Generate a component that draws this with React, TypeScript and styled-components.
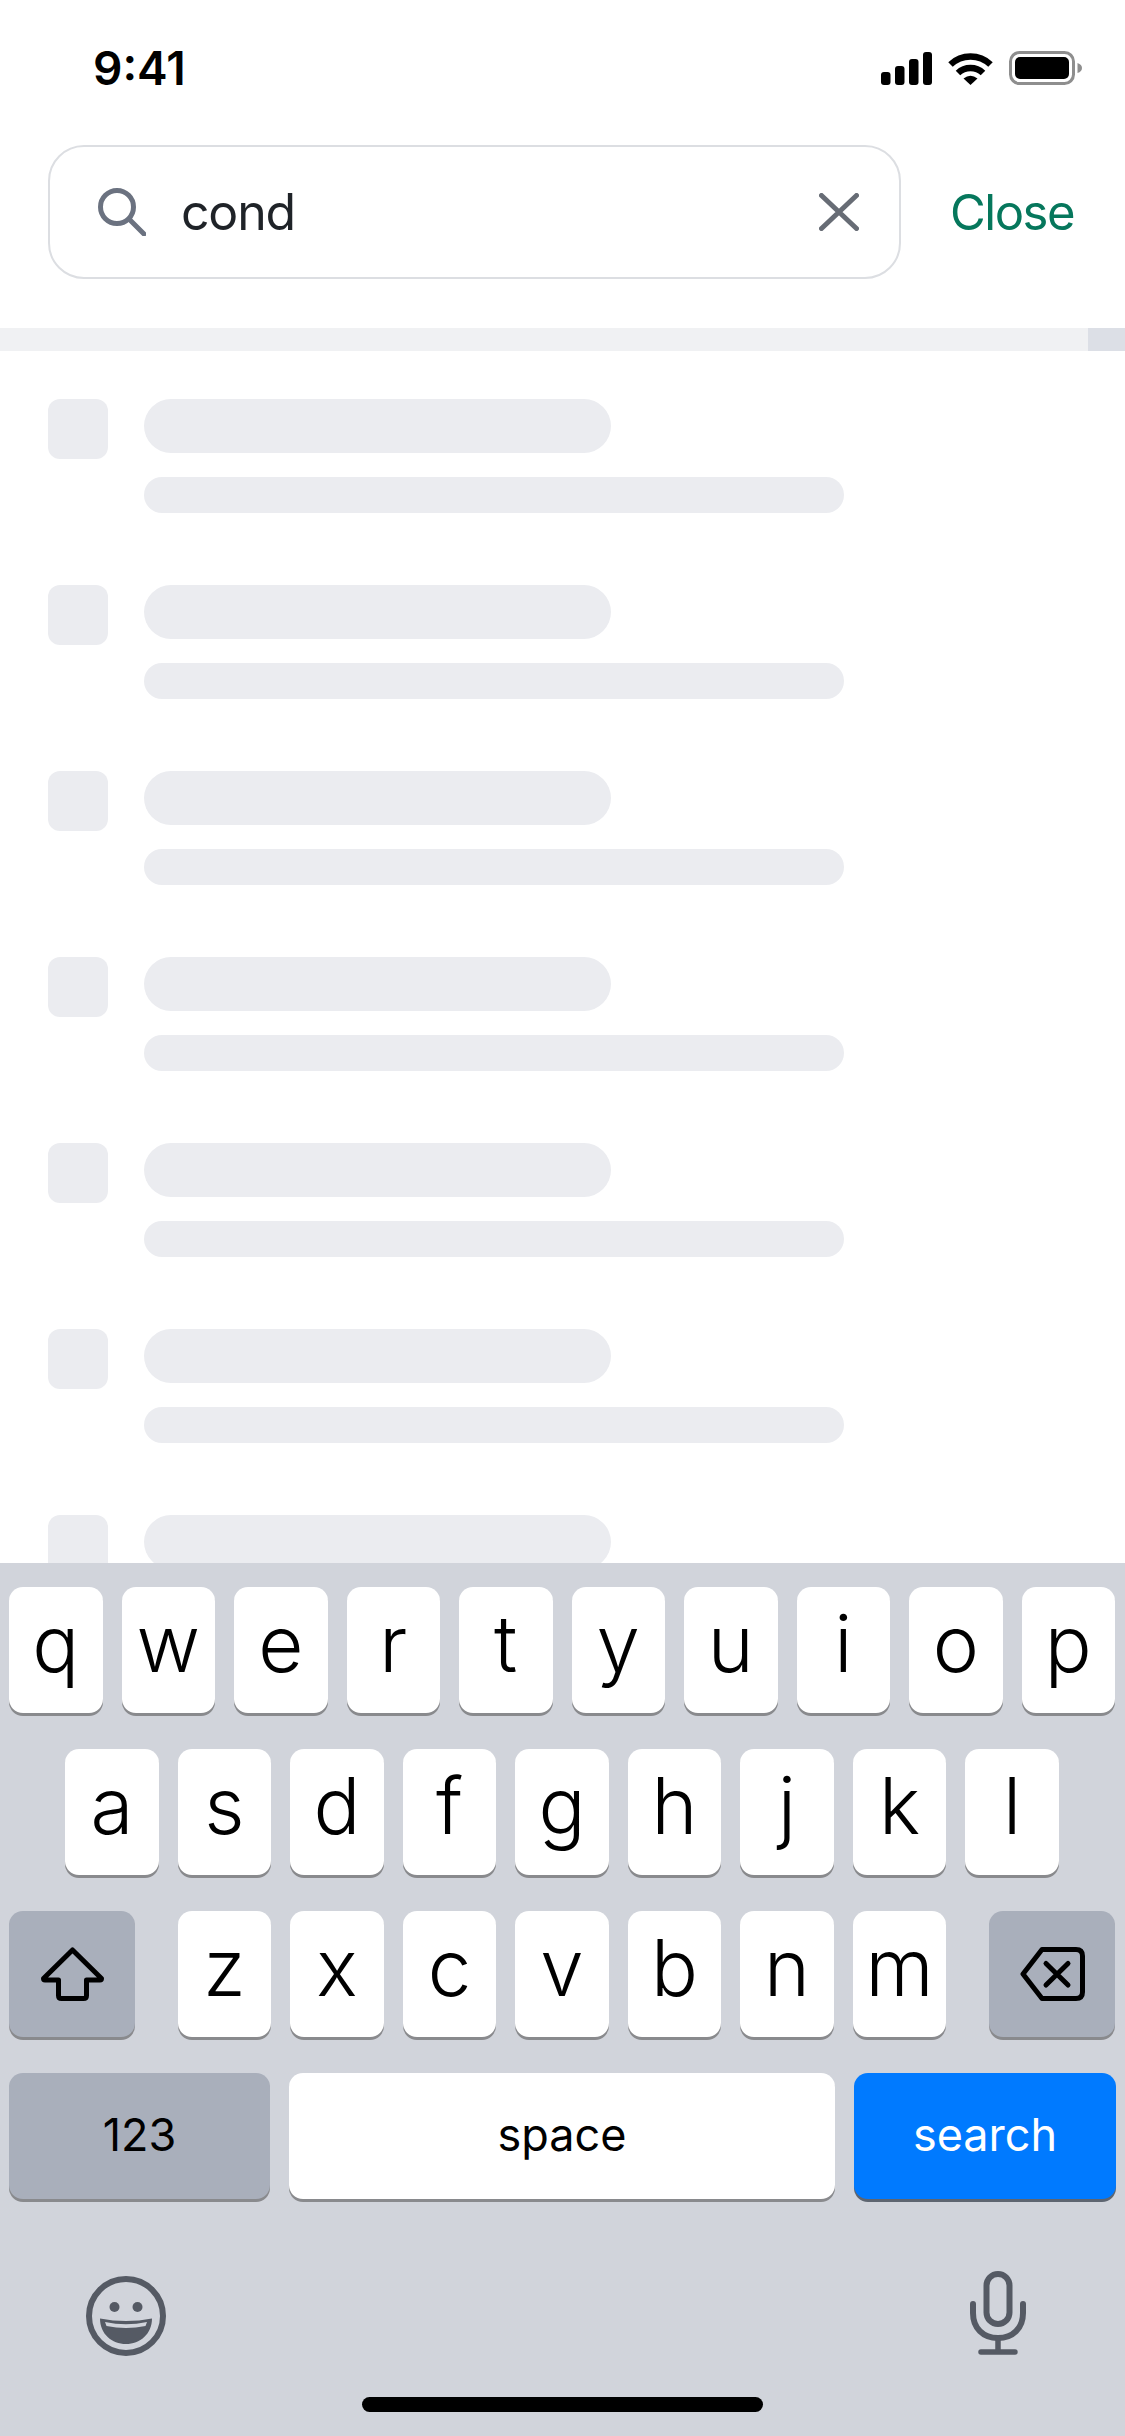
import React from "react";
import styled, { createGlobalStyle } from "styled-components";

const GlobalStyle = createGlobalStyle`
	html, body {
		margin: 0;
		padding: 0;
		background: #fff;
	}
	* {
		box-sizing: border-box;
	}
`;

const Screen = styled.div`
	width: 1125px;
	height: 2436px;
	display: flex;
	flex-direction: column;
	overflow: hidden;
	background: #fff;
	font-family: Inter, "Liberation Sans", sans-serif;
`;

const StatusBar = styled.div`
	height: 136px;
	flex: none;
	display: flex;
	align-items: center;
	justify-content: space-between;
	padding: 0 42px 0 93px;
`;

const Time = styled.span`
	font-size: 46px;
	font-weight: 600;
	color: #000;
`;

const StatusIcons = styled.div`
	display: flex;
	align-items: center;
	gap: 16px;
`;

const SearchRow = styled.div`
	flex: none;
	margin-top: 9px;
	padding-left: 48px;
	display: flex;
	align-items: center;
	gap: 49px;
`;

const SearchBox = styled.div`
	width: 853px;
	height: 134px;
	display: flex;
	align-items: center;
	padding: 0 40px 0 48px;
	border: 2px solid #dcdee2;
	border-radius: 36px;
`;

const SearchText = styled.span`
	flex: 1;
	margin-left: 35px;
	font-size: 50px;
	letter-spacing: -1.2px;
	color: #1f2328;
`;

const CloseLink = styled.span`
	font-size: 49px;
	letter-spacing: -1.5px;
	color: #06775c;
`;

const Progress = styled.div`
	flex: none;
	height: 23px;
	margin-top: 49px;
	display: flex;
	justify-content: flex-end;
	background: #f0f1f3;
`;

const ProgressThumb = styled.div`
	width: 37px;
	background: #dcdfe6;
`;

const SkeletonList = styled.div`
	flex: 1;
	min-height: 0;
	overflow: hidden;
	padding: 48px 0 0 48px;
	display: flex;
	flex-direction: column;
	gap: 72px;
`;

const SkeletonRow = styled.div`
	flex: none;
	display: flex;
	gap: 36px;
`;

const SkeletonSquare = styled.div`
	width: 60px;
	height: 60px;
	border-radius: 12px;
	background: #ebecf0;
`;

const SkeletonLines = styled.div`
	display: flex;
	flex-direction: column;
	gap: 24px;
`;

const SkeletonLine = styled.div<{ $wide?: boolean }>`
	width: ${(p) => (p.$wide ? 700 : 467)}px;
	height: ${(p) => (p.$wide ? 36 : 54)}px;
	border-radius: 27px;
	background: #ebecf0;
`;

const Keyboard = styled.div`
	flex: none;
	height: 873px;
	padding-top: 24px;
	display: flex;
	flex-direction: column;
	background: #d1d4db;
`;

const KeyRow = styled.div<{ $inset?: boolean }>`
	height: 126px;
	margin-bottom: 36px;
	padding: 0 10px 0 9px;
	display: flex;
	gap: 19px;
	justify-content: ${(p) => (p.$inset ? "center" : "space-between")};
`;

const KeyGroup = styled.div`
	display: flex;
	gap: 19px;
`;

const Key = styled.div<{ $tone?: "light" | "dark" | "blue"; $width?: number; $small?: boolean }>`
	width: ${(p) => p.$width ?? 93.5}px;
	height: 126px;
	flex: none;
	display: flex;
	align-items: center;
	justify-content: center;
	padding-bottom: ${(p) => (p.$small ? 4 : p.$tone === "dark" ? 0 : 14)}px;
	border-radius: 14px;
	font-family: Inter, "Liberation Sans", sans-serif;
	font-size: ${(p) => (p.$small ? 45 : 78)}px;
	font-weight: ${(p) => (p.$small ? 400 : 300)};
	color: ${(p) => (p.$tone === "blue" ? "#fff" : "#000")};
	background: ${(p) =>
		p.$tone === "dark" ? "#a9afbb" : p.$tone === "blue" ? "#007aff" : "#fff"};
	box-shadow: 0 3px 0 ${(p) => (p.$tone === "blue" ? "#5e6570" : "#898a8d")};
`;

const BottomIcons = styled.div`
	margin-top: 41px;
	height: 80px;
	padding: 0 99px 0 86px;
	display: flex;
	align-items: flex-end;
	justify-content: space-between;
`;

const HomeBar = styled.div`
	width: 401px;
	height: 15px;
	margin: 41px auto 0;
	border-radius: 8px;
	background: #000;
`;

const SignalIcon = () => (
	<svg width="51" height="33" viewBox="0 0 51 33">
		<rect x="0" y="20" width="9.5" height="13" rx="3" fill="#000" />
		<rect x="14" y="14" width="9.5" height="19" rx="3" fill="#000" />
		<rect x="28" y="7" width="9.5" height="26" rx="3" fill="#000" />
		<rect x="42" y="0" width="9" height="33" rx="3" fill="#000" />
	</svg>
);

const WifiIcon = () => (
	<svg width="45" height="33" viewBox="0 0 45 33">
		<path d="M2.5 12.5A29 29 0 0 1 42.5 12.5" fill="none" stroke="#000" strokeWidth="6.5" />
		<path d="M10 21A18 18 0 0 1 35 21" fill="none" stroke="#000" strokeWidth="6.5" />
		<path d="M15.5 26.5Q22.5 21 29.5 26.5L22.5 33Z" fill="#000" />
	</svg>
);

const BatteryIcon = () => (
	<svg width="74" height="34" viewBox="0 0 74 34">
		<rect x="1.5" y="1.5" width="63" height="31" rx="9" fill="none" stroke="#8e8e8e" strokeWidth="3" />
		<rect x="6" y="6" width="54" height="22" rx="5" fill="#000" />
		<path d="M68.5 12Q73 13.5 73 17Q73 20.5 68.5 22Z" fill="#8e8e8e" />
	</svg>
);

const SearchIcon = () => (
	<svg width="48" height="48" viewBox="0 0 48 48" style={{ flex: "none" }}>
		<circle cx="19" cy="19" r="16.5" fill="none" stroke="#6b7280" strokeWidth="5" />
		<path d="M31 31L46 46" stroke="#6b7280" strokeWidth="5" strokeLinecap="round" />
	</svg>
);

const ClearIcon = () => (
	<svg width="40" height="38" viewBox="0 0 40 38">
		<path d="M2.5 2.5L37.5 35.5M37.5 2.5L2.5 35.5" stroke="#676c75" strokeWidth="5" strokeLinecap="round" />
	</svg>
);

const ShiftIcon = () => (
	<svg width="63" height="54" viewBox="0 0 63 54">
		<path
			d="M31.5 3L60.5 31.5Q60.5 33 59 33H45.5V48.5Q45.5 51.5 42.5 51.5H20.5Q17.5 51.5 17.5 48.5V33H4Q2.5 33 2.5 31.5Z"
			fill="none"
			stroke="#000"
			strokeWidth="5"
			strokeLinejoin="round"
		/>
	</svg>
);

const BackspaceIcon = () => (
	<svg width="65" height="54" viewBox="0 0 65 54">
		<path
			d="M22 2.5H56Q62.5 2.5 62.5 9V45Q62.5 51.5 56 51.5H22L3 27Z"
			fill="none"
			stroke="#000"
			strokeWidth="5"
			strokeLinejoin="round"
		/>
		<path d="M26 16.5L48 38M48 16.5L26 38" stroke="#000" strokeWidth="5" strokeLinecap="round" />
	</svg>
);

const EmojiIcon = () => (
	<svg width="80" height="80" viewBox="0 0 80 80">
		<circle cx="40" cy="40" r="37" fill="none" stroke="#555a64" strokeWidth="6" />
		<circle cx="28.5" cy="31" r="5" fill="#555a64" />
		<circle cx="51.5" cy="31" r="5" fill="#555a64" />
		<path d="M14 42.5Q40 47.5 66 42.5C66 58 54 68 40 68C26 68 14 58 14 42.5Z" fill="#555a64" />
		<path d="M19 46Q40 50.5 61 46L59.5 50Q40 54 20.5 50Z" fill="#d1d4db" />
	</svg>
);

const MicIcon = () => (
	<svg width="56" height="85" viewBox="0 0 56 85">
		<rect x="16.5" y="3" width="23" height="50" rx="11.5" fill="none" stroke="#555a64" strokeWidth="6" />
		<path d="M3 33V42C3 57 13 67 28 67C43 67 53 57 53 42V33" fill="none" stroke="#555a64" strokeWidth="6" strokeLinecap="round" />
		<path d="M28 67V81M11 81H45" fill="none" stroke="#555a64" strokeWidth="5.5" strokeLinecap="round" />
	</svg>
);

const rowOne = ["q", "w", "e", "r", "t", "y", "u", "i", "o", "p"];
const rowTwo = ["a", "s", "d", "f", "g", "h", "j", "k", "l"];
const rowThree = ["z", "x", "c", "v", "b", "n", "m"];
const skeletons = [0, 1, 2, 3, 4, 5, 6];

export default function App() {
	return (
		<>
			<GlobalStyle />
			<Screen>
				<StatusBar>
					<Time>9:41</Time>
					<StatusIcons>
						<SignalIcon />
						<WifiIcon />
						<BatteryIcon />
					</StatusIcons>
				</StatusBar>

				<SearchRow>
					<SearchBox>
						<SearchIcon />
						<SearchText>cond</SearchText>
						<ClearIcon />
					</SearchBox>
					<CloseLink>Close</CloseLink>
				</SearchRow>

				<Progress>
					<ProgressThumb />
				</Progress>

				<SkeletonList>
					{skeletons.map((i) => (
						<SkeletonRow key={i}>
							<SkeletonSquare />
							<SkeletonLines>
								<SkeletonLine />
								<SkeletonLine $wide />
							</SkeletonLines>
						</SkeletonRow>
					))}
				</SkeletonList>

				<Keyboard>
					<KeyRow>
						{rowOne.map((k) => (
							<Key key={k}>{k}</Key>
						))}
					</KeyRow>
					<KeyRow $inset>
						{rowTwo.map((k) => (
							<Key key={k}>{k}</Key>
						))}
					</KeyRow>
					<KeyRow>
						<Key $tone="dark" $width={126}>
							<ShiftIcon />
						</Key>
						<KeyGroup>
							{rowThree.map((k) => (
								<Key key={k}>{k}</Key>
							))}
						</KeyGroup>
						<Key $tone="dark" $width={126}>
							<BackspaceIcon />
						</Key>
					</KeyRow>
					<KeyRow>
						<Key $tone="dark" $width={261} $small>123</Key>
						<Key $width={546} $small>space</Key>
						<Key $tone="blue" $width={262} $small>search</Key>
					</KeyRow>
					<BottomIcons>
						<EmojiIcon />
						<MicIcon />
					</BottomIcons>
					<HomeBar />
				</Keyboard>
			</Screen>
		</>
	);
}
